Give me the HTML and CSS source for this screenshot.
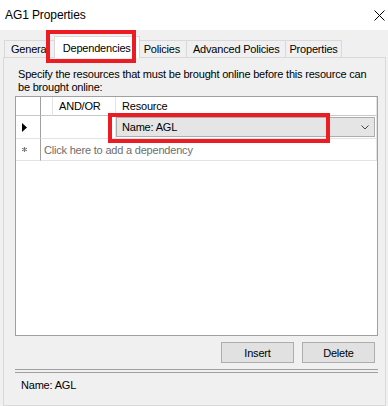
FILE: index.html
```html
<!DOCTYPE html>
<html lang="en">
<head>
    <meta charset="UTF-8">
    <meta name="viewport" content="width=device-width, initial-scale=1.0">
    <title>AG1 Properties</title>
    <link rel="stylesheet" href="styles.css">
</head>
<body>
<div class="window">
    <!-- Title bar -->
    <div class="titlebar">
        <span class="title">AG1 Properties</span>
        <svg class="close" width="11" height="11" viewBox="0 0 11 11">
            <path d="M0.5 0.5 L10.5 10.5 M10.5 0.5 L0.5 10.5" stroke="#000" stroke-width="1" fill="none"/>
        </svg>
    </div>

    <div class="content">
        <!-- Tabs -->
        <div class="tabs">
            <div class="tab">General</div>
            <div class="tab active">Dependencies</div>
            <div class="tab">Policies</div>
            <div class="tab">Advanced Policies</div>
            <div class="tab tab-narrow">Properties</div>
        </div>

        <!-- Dependencies page -->
        <div class="panel">
            <p class="hint">Specify the resources that must be brought online before this resource can be brought online:</p>

            <div class="grid">
                <div class="cell row-head head"></div>
                <div class="cell head"></div>
                <div class="cell head col-text">AND/OR</div>
                <div class="cell head col-text last">Resource</div>

                <div class="cell row-head">
                    <svg width="5" height="9" viewBox="0 0 5 9"><polygon points="0,0 5,4.5 0,9" fill="#000"/></svg>
                </div>
                <div class="cell span-2"></div>
                <div class="cell combo-cell last">
                    <div class="combo">
                        <span>Name: AGL</span>
                        <svg width="8" height="5" viewBox="0 0 8 5"><polyline points="0.5,0.5 4,4 7.5,0.5" stroke="#444" stroke-width="1" fill="none"/></svg>
                    </div>
                </div>

                <div class="cell row-head">
                    <svg width="5" height="5" viewBox="0 0 5 5"><path d="M2.5 0 V5 M0 1.2 L5 3.8 M0 3.8 L5 1.2" stroke="#777" stroke-width="1.1"/></svg>
                </div>
                <div class="cell span-3 new-row last">Click here to add a dependency</div>
            </div>

            <div class="actions">
                <button class="btn">Insert</button>
                <button class="btn">Delete</button>
            </div>

            <div class="separator"></div>
            <div class="status">Name: AGL</div>
        </div>
    </div>

    <!-- Highlight boxes drawn over the dialog -->
    <div class="mark mark-tab"></div>
    <div class="mark mark-cell"></div>
</div>
</body>
</html>
```

FILE: styles.css
```css
* {
    box-sizing: border-box;
}

body {
    margin: 0;
    font-family: "Liberation Sans", Arial, sans-serif;
    font-size: 11px;
    color: #000;
    background-color: #f0f0f0;
}

.window {
    position: relative;
    width: 388px;
    height: 406px;
    overflow: hidden;
    display: flex;
    flex-direction: column;
    background-color: #f0f0f0;
}

.titlebar {
    height: 30px;
    flex-shrink: 0;
    background-color: #fff;
    display: flex;
    align-items: center;
    justify-content: space-between;
    padding: 0 3px 0 5px;
}

.title {
    font-size: 12px;
    letter-spacing: -0.1px;
}

.content {
    flex: 1;
    display: flex;
    flex-direction: column;
    padding: 6px 2px 0 3px;
}

.tabs {
    height: 21px;
    display: flex;
    align-items: flex-end;
    padding-left: 2px;
    position: relative;
    z-index: 1;
}

.tab {
    height: 17px;
    padding: 0 6px;
    display: flex;
    align-items: center;
    border: 1px solid #d9d9d9;
    border-bottom: none;
    margin-left: -1px;
    background-color: #f0f0f0;
    letter-spacing: -0.2px;
    white-space: nowrap;
}

.tab.active {
    height: 22px;
    margin: 0 -2px -1px -2px;
    padding: 0 8px;
    background-color: #fff;
    position: relative;
    z-index: 2;
}

.tab-narrow {
    padding: 0 3px;
}

.panel {
    flex: 1;
    border: 1px solid #d9d9d9;
    background-color: #f0f0f0;
    padding: 10px 7px 0 11px;
    display: flex;
    flex-direction: column;
}

.hint {
    margin: 0 0 2px 3px;
    line-height: 13px;
    letter-spacing: -0.2px;
}

.grid {
    height: 240px;
    flex-shrink: 0;
    border: 1px solid #a0a0a0;
    background-color: #fff;
    display: grid;
    grid-template-columns: 25px 12px 63px 1fr;
    grid-template-rows: 19px 23px 22px;
    align-content: start;
}

.cell {
    border-bottom: 1px solid #e3e3e3;
    border-right: 1px solid #e3e3e3;
    display: flex;
    align-items: center;
    letter-spacing: -0.2px;
    white-space: nowrap;
}

.row-head {
    border-right-color: #a0a0a0;
    padding-left: 6px;
}

.head {
    border-bottom-color: #c8c8c8;
}

.col-text {
    padding-left: 6px;
}

.span-2 {
    grid-column: span 2;
}

.span-3 {
    grid-column: span 3;
}

.combo-cell {
    padding: 1px 1px 1px 0;
}

.combo {
    width: 100%;
    height: 100%;
    border: 1px solid #adadad;
    background-color: #e5e5e5;
    display: flex;
    align-items: center;
    justify-content: space-between;
    padding: 0 5px 0 5px;
}

.new-row {
    padding-left: 3px;
    color: #6d6d6d;
}

.actions {
    display: flex;
    justify-content: flex-end;
    gap: 8px;
    margin-top: 6px;
    padding-right: 3px;
}

.btn {
    width: 73px;
    height: 21px;
    padding: 0;
    border: 1px solid #adadad;
    background-color: #e1e1e1;
    font-family: "Liberation Sans", Arial, sans-serif;
    font-size: 11px;
    letter-spacing: -0.2px;
    color: #000;
}

.separator {
    height: 4px;
    margin-top: 6px;
    border-top: 1px solid #a0a0a0;
    border-bottom: 1px solid #a0a0a0;
}

.status {
    margin-top: 6px;
    padding-left: 6px;
    line-height: 13px;
    letter-spacing: -0.2px;
}

.mark {
    position: absolute;
    border: 4px solid #ec1c24;
    z-index: 5;
}

.mark-tab {
    left: 46px;
    top: 30px;
    width: 90px;
    height: 33px;
}

.mark-cell {
    left: 108px;
    top: 113px;
    width: 222px;
    height: 30px;
}
```
